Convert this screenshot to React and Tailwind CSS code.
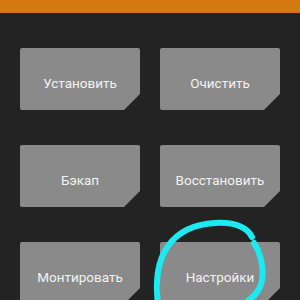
import React from "react";

const buttons = [
  "Установить",
  "Очистить",
  "Бэкап",
  "Восстановить",
  "Монтировать",
  "Настройки",
];

const App = () => {
  return (
    <div
      className="relative w-[300px] h-[300px] overflow-hidden bg-[#232323]"
      style={{ fontFamily: "Roboto, 'Noto Sans', sans-serif" }}
    >
      {/* Top bar */}
      <div className="h-[13px] bg-[#d4790f]" />

      {/* Buttons */}
      <div className="grid grid-cols-2 gap-x-5 gap-y-[35px] px-5 pt-[35px]">
        {buttons.map((label) => (
          <div
            key={label}
            className="h-[62px] bg-[#8a8a8a] rounded-[2px] flex items-center justify-center pt-2 text-[13.5px] text-[#f2f2f2] [clip-path:polygon(0_0,100%_0,100%_calc(100%-16px),calc(100%-16px)_100%,0_100%)]"
          >
            {label}
          </div>
        ))}
      </div>

      {/* Hand-drawn highlight */}
      <svg
        className="absolute inset-0 pointer-events-none"
        width="300"
        height="300"
        viewBox="0 0 300 300"
        fill="none"
      >
        <path
          d="M252 237 C246 226 232 222 215 223 C195 224 178 232 168 246 C158 260 155 280 158 304"
          stroke="#1de9f0"
          strokeWidth="6"
          strokeLinecap="round"
        />
        <path
          d="M254 243 C260 252 264 266 262 280 C260 292 252 298 244 304"
          stroke="#1de9f0"
          strokeWidth="6"
          strokeLinecap="round"
        />
      </svg>
    </div>
  );
};

export default App;
